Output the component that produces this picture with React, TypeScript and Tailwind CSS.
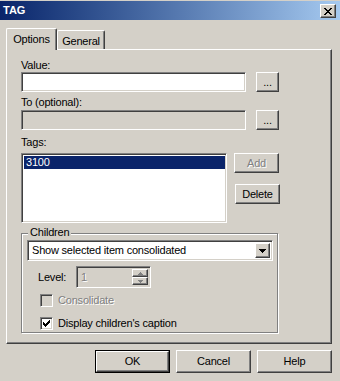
import React from "react";

const raised =
  "border border-t-white border-l-white border-r-[#404040] border-b-[#404040] shadow-[inset_-1px_-1px_0_#808080]";
const sunken =
  "border border-t-[#808080] border-l-[#808080] border-r-white border-b-white shadow-[inset_1px_1px_0_#404040,inset_-1px_-1px_0_#d4d0c8]";
const disabledText = "text-[#808080] [text-shadow:1px_1px_0_#ffffff]";

function Bitmap({ rows, color = "#000", className = "" }: { rows: string[]; color?: string; className?: string }) {
  const w = rows[0].length;
  const h = rows.length;
  const rects: React.ReactNode[] = [];
  rows.forEach((r, y) =>
    r.split("").forEach((c, x) => {
      if (c === "x") rects.push(<rect key={`${x}-${y}`} x={x} y={y} width={1} height={1} fill={color} />);
    })
  );
  return (
    <svg width={w} height={h} viewBox={`0 0 ${w} ${h}`} shapeRendering="crispEdges" className={className}>
      {rects}
    </svg>
  );
}

const closeX = [
  "xx....xx",
  ".xx..xx.",
  "..xxxx..",
  "...xx...",
  "..xxxx..",
  ".xx..xx.",
  "xx....xx",
];

const check = [
  "......x",
  ".....xx",
  "x...xxx",
  "xx.xxx.",
  "xxxxx..",
  ".xxx...",
  "..x....",
];

const down = ["xxxxxxx", ".xxxxx.", "..xxx..", "...x..."];
const spinUp = ["..x..", ".xxx.", "xxxxx"];
const spinDown = ["xxxxx", ".xxx.", "..x.."];

function Button({
  children,
  className = "",
  disabled = false,
}: {
  children: React.ReactNode;
  className?: string;
  disabled?: boolean;
}) {
  return (
    <div className={`${raised} flex items-center justify-center bg-[#d4d0c8] ${className}`}>
      <span className={disabled ? disabledText : ""}>{children}</span>
    </div>
  );
}

function Checkbox({ checked, disabled }: { checked?: boolean; disabled?: boolean }) {
  return (
    <div
      className={`${sunken} w-[13px] h-[13px] flex items-center justify-center ${
        disabled ? "bg-[#d4d0c8]" : "bg-white"
      }`}
    >
      {checked && <Bitmap rows={check} />}
    </div>
  );
}

export default function App() {
  return (
    <div className="w-[340px] h-[381px] bg-[#d4d0c8] pt-px font-['Liberation_Sans',Arial,sans-serif] text-[11px] leading-[13px] tracking-[-0.2px] text-black select-none">
      {/* Title bar */}
      <div className="h-[19px] flex items-center pl-[3px] pr-[4px] bg-linear-to-r from-[#0a246a] to-[#a6caf0]">
        <span className="font-bold text-white tracking-normal">TAG</span>
        <div className={`${raised} ml-auto mt-px w-[16px] h-[14px] bg-[#d4d0c8] flex items-center justify-center`}>
          <Bitmap rows={closeX} />
        </div>
      </div>

      {/* Tabs */}
      <div className="mt-[8px] h-[21px] flex items-end pl-[6px]">
        <div className="relative z-10 -mb-px h-[22px] w-[51px] bg-[#d4d0c8] border-t border-l border-r border-t-white border-l-white border-r-[#404040] shadow-[inset_-1px_0_0_#808080] rounded-t-[2px] pt-[4px] text-center">
          Options
        </div>
        <div className="h-[19px] w-[48px] bg-[#d4d0c8] border-t border-l border-r border-t-white border-l-white border-r-[#404040] shadow-[inset_-1px_0_0_#808080] rounded-t-[2px] pt-[4px] text-center">
          General
        </div>
      </div>

      {/* Panel */}
      <div className={`${raised} ml-[6px] w-[326px] h-[295px] pl-[14px] flex flex-col`}>
        <div className="mt-[9px] h-[13px]">Value:</div>
        <div className="flex h-[20px]">
          <div className={`${sunken} w-[225px] h-[20px] bg-white`} />
          <Button className="ml-[10px] w-[23px] h-[20px]">...</Button>
        </div>

        <div className="mt-[4px] h-[13px]">To (optional):</div>
        <div className="mt-px flex h-[20px]">
          <div className={`${sunken} w-[225px] h-[20px] bg-[#d4d0c8]`} />
          <Button className="ml-[10px] w-[23px] h-[20px]">...</Button>
        </div>

        <div className="mt-[6px] h-[13px]">Tags:</div>
        <div className="mt-[4px] flex">
          <div className={`${sunken} w-[206px] h-[70px] bg-white p-[1px]`}>
            <div className="h-[13px] ml-px mt-px bg-[#0a246a] text-white pl-[2px]">3100</div>
          </div>
          <div className="ml-[7px] flex flex-col">
            <Button disabled className="w-[45px] h-[20px]">
              Add
            </Button>
            <Button className="mt-[11px] ml-px w-[45px] h-[20px]">Delete</Button>
          </div>
        </div>

        {/* Children group */}
        <div className="relative mt-[10px] w-[257px] h-[100px] border border-[#808080] shadow-[inset_1px_1px_0_#ffffff,1px_1px_0_#ffffff] flex flex-col">
          <div className="absolute left-[6px] top-[-8px] px-[2px] bg-[#d4d0c8] h-[13px]">Children</div>

          <div className={`${sunken} ml-[5px] mt-[6px] w-[246px] h-[21px] bg-white flex items-stretch p-[2px]`}>
            <div className="flex-1 flex items-center pl-[2px]">Show selected item consolidated</div>
            <div className={`${raised} w-[15px] bg-[#d4d0c8] flex items-center justify-center`}>
              <Bitmap rows={down} />
            </div>
          </div>

          <div className="mt-[5px] ml-[16px] flex items-center h-[22px]">
            <div className="w-[38px]">Level:</div>
            <div className={`${sunken} w-[75px] h-[22px] bg-[#d4d0c8] flex p-[2px]`}>
              <div className={`flex-1 flex items-center pl-[2px] ${disabledText}`}>1</div>
              <div className="w-[16px] flex flex-col">
                <div className={`${raised} h-[9px] bg-[#d4d0c8] flex items-center justify-center`}>
                  <Bitmap rows={spinUp} color="#808080" />
                </div>
                <div className={`${raised} h-[9px] bg-[#d4d0c8] flex items-center justify-center`}>
                  <Bitmap rows={spinDown} color="#808080" />
                </div>
              </div>
            </div>
          </div>

          <div className="mt-[6px] ml-[18px] flex items-center h-[13px]">
            <Checkbox disabled />
            <span className={`ml-[5px] ${disabledText}`}>Consolidate</span>
          </div>

          <div className="mt-[10px] ml-[18px] flex items-center h-[13px]">
            <Checkbox checked />
            <span className="ml-[5px]">Display children's caption</span>
          </div>
        </div>
      </div>

      {/* Bottom buttons */}
      <div className="mt-[6px] flex justify-end pr-[8px] gap-[6px]">
        <div className="w-[75px] h-[23px] border border-black flex">
          <Button className="flex-1">OK</Button>
        </div>
        <Button className="w-[75px] h-[23px]">Cancel</Button>
        <Button className="w-[75px] h-[23px]">Help</Button>
      </div>
    </div>
  );
}
